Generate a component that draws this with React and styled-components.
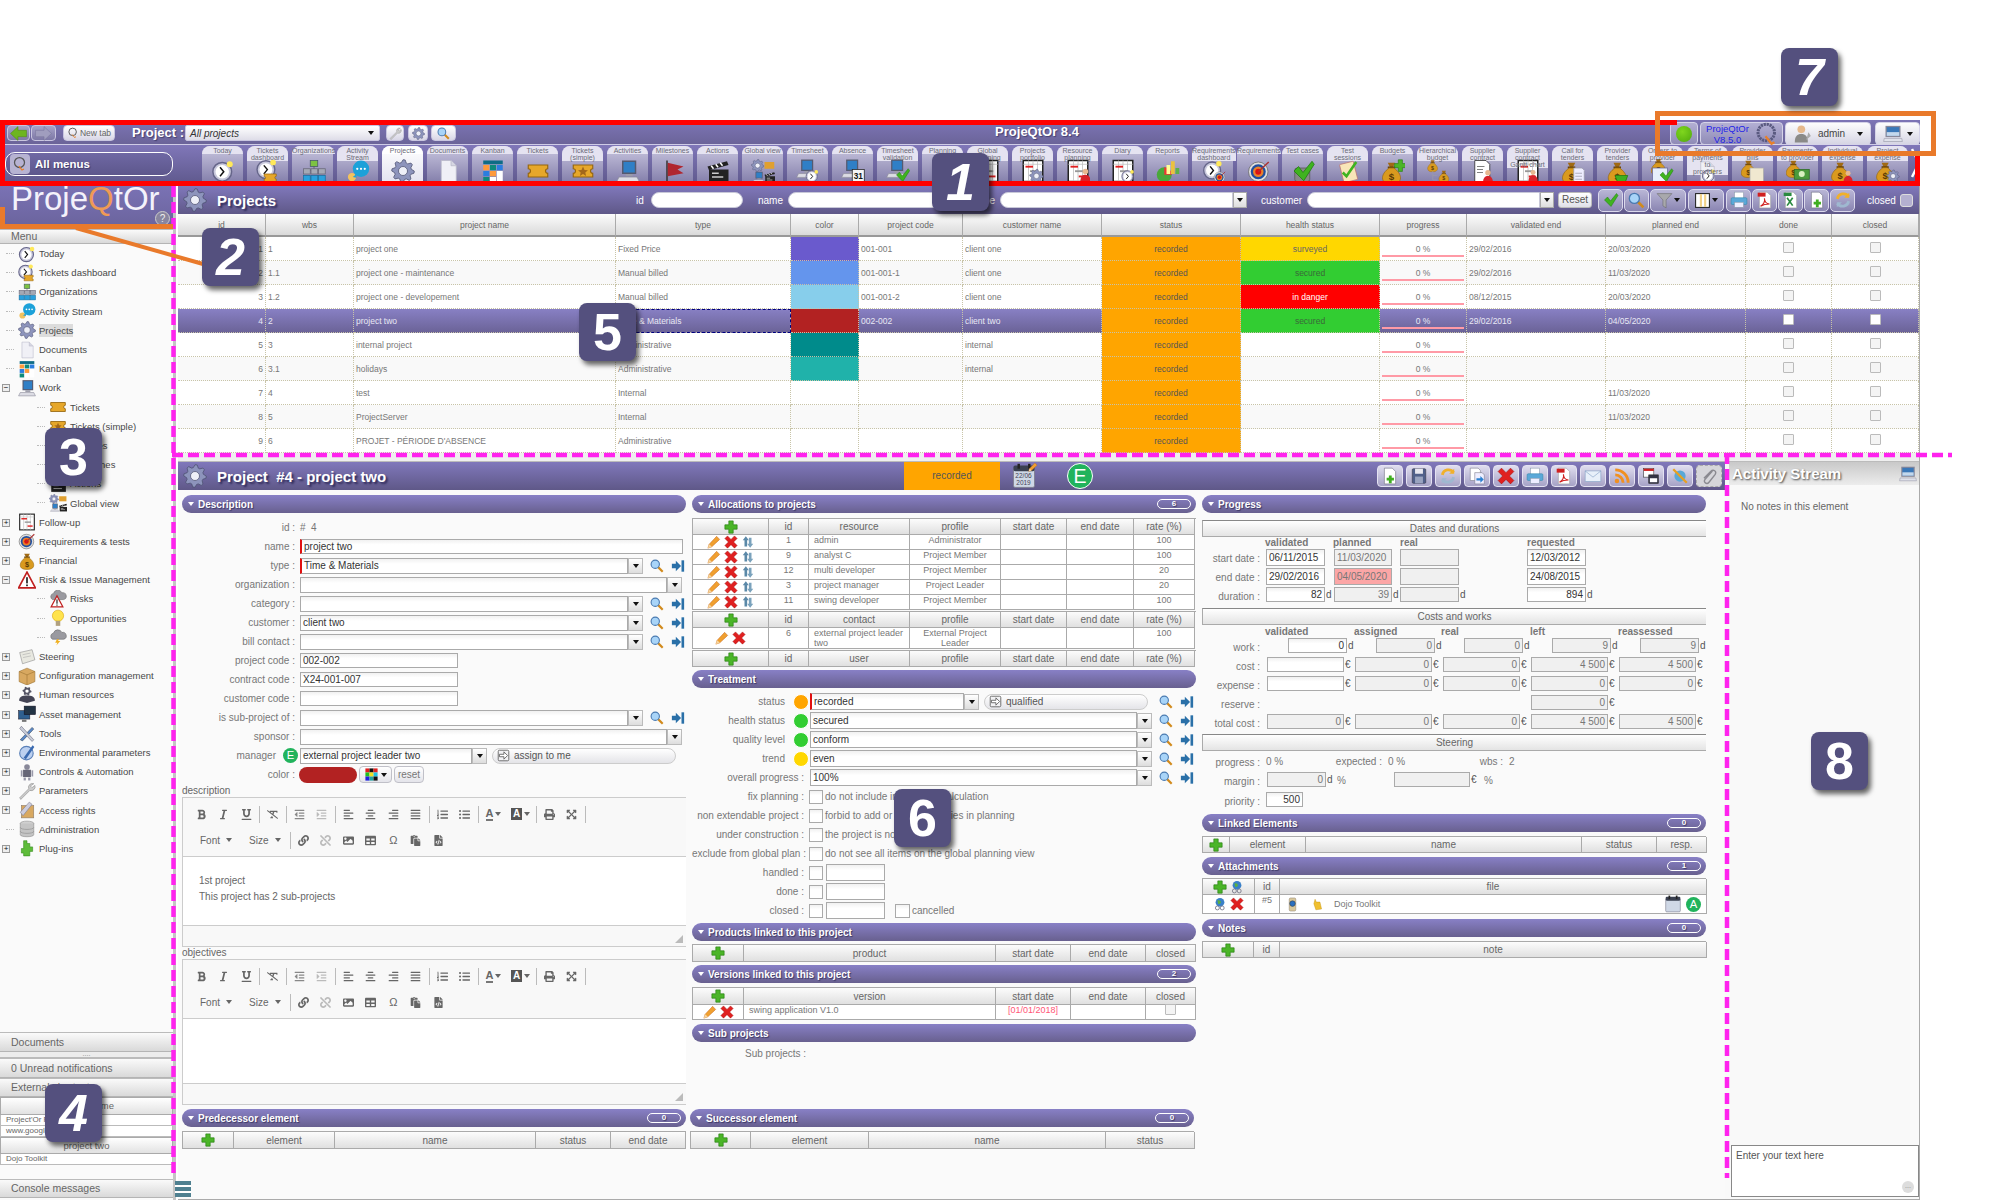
import React from 'react';
import styled, { createGlobalStyle } from 'styled-components';
import { FaBold, FaItalic, FaUnderline, FaRemoveFormat, FaOutdent, FaIndent, FaAlignLeft, FaAlignCenter, FaAlignRight, FaAlignJustify, FaListOl, FaListUl, FaPrint, FaExpandArrowsAlt, FaLink, FaUnlink, FaImage, FaTable, FaPaste, FaFileCode } from 'react-icons/fa';

const Global = createGlobalStyle`
  html, body { margin: 0; padding: 0; background: #fff; font-family: "Liberation Sans", Arial, sans-serif; }
  * { box-sizing: border-box; }
`;

/* ---------- drawings ---------- */
const gearPts = (cx, cy, r, n = 8) => {
  const pts = [];
  for (let i = 0; i < n * 4; i++) {
    const a = (i / (n * 4)) * Math.PI * 2;
    const q = i % 4;
    const rr = q === 0 || q === 1 ? r : r * 0.76;
    pts.push(`${(cx + rr * Math.cos(a)).toFixed(1)},${(cy + rr * Math.sin(a)).toFixed(1)}`);
  }
  return pts.join(' ');
};
const P = {
  clock: <><circle cx="15" cy="17" r="12.5" fill="#c8c8dc" stroke="#66668a" strokeWidth="2" /><circle cx="15" cy="17" r="9" fill="#fff" /><path d="M12 11l5 6-5 6" stroke="#111" strokeWidth="2" fill="none" /><circle cx="25" cy="7" r="4" fill="#ffe95a" /></>,
  ticket: <path d="M3 8h26v5a3 3 0 0 0 0 6v5H3v-5a3 3 0 0 0 0-6z" fill="#e6a72a" stroke="#96660e" strokeWidth="1.5" />,
  ticketStar: <><path d="M3 8h26v5a3 3 0 0 0 0 6v5H3v-5a3 3 0 0 0 0-6z" fill="#e6a72a" stroke="#96660e" strokeWidth="1.5" /><path d="M16 10l2 4.5 4.6.4-3.5 3 1 4.6-4.1-2.4-4.100 2.400 1-4.600-3.500-3 4.600-.4z" fill="#a2671a" /></>,
  org: <><path d="M16 9v6M7 15h18M7 15v4M16 15v4M25 15v4" stroke="#555" fill="none" /><rect x="11" y="2" width="10" height="8" fill="#7dc242" stroke="#456" /><rect x="2" y="13" width="9" height="7" fill="#a5a9b5" stroke="#667" /><rect x="12" y="13" width="9" height="7" fill="#a5a9b5" stroke="#667" /><rect x="22" y="13" width="9" height="7" fill="#a5a9b5" stroke="#667" /><rect x="2" y="22" width="9" height="8" fill="#2aa0dd" stroke="#1670a0" /><rect x="12" y="22" width="9" height="8" fill="#2aa0dd" stroke="#1670a0" /><rect x="22" y="22" width="9" height="8" fill="#2aa0dd" stroke="#1670a0" /></>,
  chat: <><circle cx="8" cy="24" r="5.500" fill="#f2c25e" /><circle cx="20" cy="13" r="11" fill="#1ca1d9" /><path d="M9 24l5-4v5z" fill="#1ca1d9" /><circle cx="15" cy="13" r="1.500" fill="#fff" /><circle cx="20" cy="13" r="1.500" fill="#fff" /><circle cx="25" cy="13" r="1.500" fill="#fff" /></>,
  gear: <><polygon points={gearPts(16, 16, 15)} fill="#8d94bc" stroke="#4c5070" /><circle cx="16" cy="16" r="6" fill="#eef0f8" stroke="#4c5070" /></>,
  doc: <><path d="M7 2h13l7 7v21H7z" fill="#f0f0f6" stroke="#b8b8c8" /><path d="M20 2v7h7" fill="#d6d6e2" stroke="#b8b8c8" /></>,
  kanban: <><rect x="3" y="2" width="26" height="5" fill="#0e6c86" /><rect x="3" y="8" width="8" height="7" fill="#ff9a3c" /><rect x="12" y="8" width="8" height="7" fill="#0e8a7a" /><rect x="21" y="8" width="8" height="7" fill="#2b7de0" /><rect x="3" y="16" width="8" height="7" fill="#2b7de0" /><rect x="12" y="16" width="8" height="7" fill="#ff9a3c" /><rect x="3" y="24" width="8" height="7" fill="#0e8a7a" /><rect x="12" y="24" width="8" height="7" fill="#fff" /><rect x="21" y="16" width="8" height="15" fill="#fff" /></>,
  computer: <><rect x="8" y="2" width="19" height="18" fill="#555a70" /><rect x="10" y="4" width="15" height="14" fill="#2f7fc6" /><path d="M13 20h9v3h-9z" fill="#9a9aa8" /><path d="M4 24h24l3 6H1z" fill="#dcdce4" stroke="#8a8a98" /></>,
  flag: <><rect x="7" y="2" width="2" height="29" fill="#333" /><path d="M9 5l21 5-8 4 8 5-21 4z" fill="#b0262f" /></>,
  clapper: <><path d="M2 10l26-7 2 5-26 7z" fill="#222" /><path d="M7 9l3 4M13 7l3 4M19 5l3 4" stroke="#fff" strokeWidth="2" /><rect x="4" y="14" width="26" height="16" fill="#222" /><rect x="8" y="18" width="9" height="2" fill="#ccc" /><rect x="8" y="23" width="15" height="2" fill="#ccc" /></>,
  gantt: <><rect x="3" y="2" width="26" height="28" fill="#fff" stroke="#222" strokeWidth="2" /><path d="M3 7h26M10 2v28M16 2v28M22 2v28" stroke="#bbb" /><rect x="6" y="9" width="10" height="2.500" fill="#e02020" /><rect x="12" y="15" width="11" height="2.500" fill="#999" /><rect x="17" y="22" width="9" height="2.500" fill="#e02020" /></>,
  bag: <><path d="M11 3h10l-3 6h-4z" fill="#a06a14" /><rect x="11" y="8" width="10" height="2.500" fill="#6a4408" /><path d="M13 10h6c6 4 9 9 9 13 0 6-5 8-12 8S4 29 4 23c0-4 3-9 9-13z" fill="#d99a1e" stroke="#9a6a10" /><text x="16" y="26" fontSize="13" fontWeight="700" textAnchor="middle" fill="#5a3a05" fontFamily="Liberation Sans">$</text></>,
  check: <path d="M3 16l6-6 6 8L27 3l3 4-14 22z" fill="#3fb31f" stroke="#1f7a10" />,
  target: <><circle cx="15" cy="17" r="13" fill="#ddd" stroke="#666" /><circle cx="15" cy="17" r="10" fill="#1f4f9f" /><circle cx="15" cy="17" r="7" fill="#e8802a" /><circle cx="15" cy="17" r="4" fill="#d11" /><path d="M15 17L29 4" stroke="#a33" strokeWidth="2" /></>,
  person: <><circle cx="16" cy="9" r="6" fill="#e8b890" /><path d="M5 31c0-11 5-15 11-15s11 4 11 15z" fill="#d8232a" /></>,
  pie: <><circle cx="11" cy="21" r="10" fill="#49a83a" /><path d="M11 21V11a10 10 0 0 1 10 10z" fill="#e33" /><rect x="14" y="8" width="5" height="12" fill="#ff9" /><rect x="20" y="3" width="5" height="17" fill="#ebc23f" /><rect x="26" y="12" width="5" height="8" fill="#5bb04a" /></>,
  clipboard: <><rect x="7" y="5" width="19" height="25" rx="1" transform="rotate(-14 16 16)" fill="#f8e5b8" stroke="#b77" /><path d="M9 18l5 5L27 4" stroke="#3fb31f" strokeWidth="3.500" fill="none" /></>,
  pencil: <><path d="M2 30l3-9L22 3l7 7-18 17z" fill="#f0a030" stroke="#c05a10" /><path d="M2 30l3-9 6 6z" fill="#f6d6a0" /></>,
  cross: <path d="M2 8l6-6 8 8 8-8 6 6-8 8 8 8-6 6-8-8-8 8-6-6 8-8z" fill="#e02020" stroke="#a01010" />,
  plus: <path d="M11 2h10v9h9v10h-9v9H11v-9H2V11h9z" fill="#4bb528" stroke="#257d10" strokeWidth="1.500" />,
  refresh: <><path d="M4 12L11 3l7 9h-4v14H8V12z" fill="#5b89a8" /><path d="M28 20l-7 9-7-9h4V6h6v14z" fill="#7aa2bc" /></>,
  mag: <><path d="M18 18l11 11" stroke="#d18a1c" strokeWidth="5" /><circle cx="12" cy="12" r="9.500" fill="#a8d4f8" stroke="#4a7ab0" strokeWidth="2.500" /></>,
  goto: <><rect x="24" y="3" width="6" height="26" fill="#2a70a8" /><path d="M2 11h9V4l12 12-12 12v-7H2z" fill="#2a70a8" /></>,
  warning: <><path d="M16 2l15 28H1z" fill="#fff" stroke="#c02020" strokeWidth="3" /><rect x="14.500" y="11" width="3" height="11" fill="#222" /><rect x="14.500" y="24" width="3" height="3" fill="#222" /></>,
  bulb: <><circle cx="16" cy="12" r="10" fill="#ffe34d" stroke="#d8a000" /><rect x="12" y="21" width="8" height="9" fill="#b0a080" /></>,
  cloud: <><path d="M6 20a6 6 0 0 1 2-11 8 8 0 0 1 15-1 6 6 0 0 1 3 12z" fill="#9a9aa0" stroke="#666" /><path d="M14 20l-3 6h4l-2 5 7-8h-4l2-3z" fill="#f0b020" /></>,
  steer: <><path d="M3 8l22-5 5 18-22 7z" fill="#e8e8e0" stroke="#888" /><path d="M8 12l14-3M9 17l14-3" stroke="#aaa" /></>,
  box: <><path d="M16 2l14 6v18l-14 6-14-6V8z" fill="#d8a860" stroke="#9a7030" /><path d="M2 8l14 6 14-6M16 14v18" stroke="#9a7030" fill="none" /></>,
  hr: <><polygon points={gearPts(16, 9, 8, 6)} fill="#556" /><circle cx="16" cy="9" r="3" fill="#fff" /><path d="M2 26c0-7 6-9 14-9s14 2 14 9l-14 4z" fill="#445" /></>,
  asset: <><rect x="1" y="10" width="20" height="15" fill="#2f5f8f" stroke="#223" /><rect x="11" y="2" width="20" height="15" fill="#223344" stroke="#112" /><rect x="7" y="26" width="8" height="4" fill="#777" /></>,
  tools: <><path d="M4 28L25 6l3 3L8 30z" fill="#5a88c8" stroke="#345" /><path d="M6 4l22 24-3 3L3 8z" fill="#c8ccd8" stroke="#667" /></>,
  env: <><circle cx="15" cy="18" r="12" fill="#bcd0f0" stroke="#5a80b8" strokeWidth="2" /><path d="M10 26L26 4l3 3L14 29z" fill="#3a6ab0" /></>,
  robot: <><circle cx="16" cy="7" r="5" fill="#889" /><rect x="9" y="12" width="14" height="13" fill="#667" /><rect x="5" y="13" width="3" height="11" fill="#99a" /><rect x="24" y="13" width="3" height="11" fill="#99a" /><rect x="10" y="26" width="4" height="5" fill="#99a" /><rect x="18" y="26" width="4" height="5" fill="#99a" /></>,
  wrench: <path d="M28 3a7 7 0 0 0-9 9L3 28l2 3 16-16a7 7 0 0 0 9-9l-5 4-3-3z" fill="#ccc" stroke="#888" />,
  access: <><rect x="6" y="8" width="22" height="22" fill="#d8a860" stroke="#876" /><path d="M4 20L20 2l5 4L9 26z" fill="#ccd" stroke="#778" /></>,
  db: <><ellipse cx="16" cy="6" rx="12" ry="4" fill="#d0d0d0" stroke="#888" /><path d="M4 6v20c0 5 24 5 24 0V6" fill="#c4c4c4" stroke="#888" /><path d="M4 13c0 5 24 5 24 0M4 20c0 5 24 5 24 0" stroke="#888" fill="none" /></>,
  puzzle: <path d="M10 3h6v5h5v6h5v8h-5v8H10v-5H6v-8h4z" fill="#5ebc3a" stroke="#308818" />,
  filter: <path d="M2 3h28L19 15v15l-6-4V15z" fill="#a8a8ac" stroke="#666" />,
  columns: <><rect x="3" y="3" width="26" height="26" fill="#fff" stroke="#222" strokeWidth="2" /><rect x="11" y="4" width="4" height="24" fill="#f2d28a" /><rect x="19" y="4" width="4" height="24" fill="#f2d28a" /></>,
  printer: <><rect x="8" y="2" width="16" height="12" fill="#fff" stroke="#89a" /><rect x="2" y="12" width="28" height="12" rx="2" fill="#5aa8d8" stroke="#38a" /><rect x="8" y="20" width="16" height="9" fill="#eef" stroke="#89a" /></>,
  pdf: <><path d="M6 2h14l6 6v22H6z" fill="#fff" stroke="#999" /><rect x="3" y="3" width="14" height="7" fill="#d02020" /><path d="M8 27c6-4 8-10 7-14 0 6 4 10 9 10-5 0-11 1-16 4z" fill="none" stroke="#d02020" strokeWidth="2" /></>,
  excel: <><path d="M6 2h14l6 6v22H6z" fill="#fff" stroke="#999" /><rect x="3" y="3" width="14" height="6" fill="#2a8a40" /><path d="M9 12l10 14M19 12L9 26" stroke="#2a8a40" strokeWidth="3" /></>,
  newdoc: <><path d="M6 2h14l6 6v22H6z" fill="#fff" stroke="#667" /><path d="M14 15h5v4h4v5h-4v5h-5v-5h-4v-5h4z" fill="#3fae20" /></>,
  save: <><rect x="4" y="3" width="24" height="26" rx="2" fill="#50608a" stroke="#334" /><rect x="9" y="3" width="14" height="9" fill="#e8e8f0" /><rect x="9" y="17" width="14" height="12" fill="#9aa4c0" /></>,
  orangeRefresh: <><path d="M6 14a11 11 0 0 1 20-4" stroke="#f0b02c" strokeWidth="5" fill="none" /><path d="M27 3v9h-9z" fill="#f0b02c" /><path d="M26 18a11 11 0 0 1-20 4" stroke="#9fb8d0" strokeWidth="5" fill="none" /><path d="M5 29v-9h9z" fill="#9fb8d0" /></>,
  copydoc: <><path d="M4 2h14l4 4v18H4z" fill="#fff" stroke="#778" /><path d="M12 10h13l4 4v16H12z" fill="#eef" stroke="#778" /><path d="M15 20h7v-4l6 6-6 6v-4h-7z" fill="#2a80d0" /></>,
  assign: <><rect x="3" y="3" width="26" height="26" rx="3" fill="#f2f2f4" stroke="#555" strokeWidth="2" /><path d="M6 13h11V7l9 9-9 9v-6H6z" fill="#fff" stroke="#555" strokeWidth="2" /></>,
  mail: <><rect x="2" y="7" width="28" height="19" fill="#e8f0fa" stroke="#7a98c0" /><path d="M2 7l14 11L30 7" stroke="#7a98c0" fill="none" /></>,
  rss: <><circle cx="7" cy="25" r="4" fill="#f09020" /><path d="M4 14a14 14 0 0 1 14 14M4 5a23 23 0 0 1 23 23" stroke="#f09020" strokeWidth="5" fill="none" /></>,
  windows: <><rect x="3" y="3" width="18" height="15" fill="#fff" stroke="#333" /><rect x="3" y="3" width="18" height="4" fill="#d02020" /><rect x="12" y="14" width="17" height="15" fill="#334" stroke="#222" /><rect x="14" y="20" width="13" height="7" fill="#fff" /></>,
  noBell: <><circle cx="16" cy="16" r="10" fill="#5aa8d8" /><path d="M4 4l24 24" stroke="#e8a020" strokeWidth="4" /></>,
  clip: <path d="M22 7L9 22c-4 5 3 10 7 5L27 13c3-5-3-10-8-5L7 20" fill="none" stroke="#8a8a90" strokeWidth="2.500" />,
  calendar: <><rect x="3" y="6" width="26" height="24" rx="2" fill="#cfd8e6" stroke="#778" /><rect x="3" y="3" width="26" height="7" rx="2" fill="#3a4050" /><rect x="8" y="1" width="3" height="6" fill="#222" /><rect x="21" y="1" width="3" height="6" fill="#222" /></>,
  monitor: <><rect x="4" y="3" width="24" height="18" fill="#889" /><rect x="6" y="5" width="20" height="14" fill="#3a78b8" /><rect x="6" y="13" width="20" height="6" fill="#c4d8ec" /><path d="M2 23h28l1 5H1z" fill="#dfe1ea" stroke="#99a" /></>,
  arrowL: <path d="M1 16L15 3v7h16v12H15v7z" fill="#6db520" stroke="#4f8a10" />,
  arrowR: <path d="M31 16L17 3v7H1v12h16v7z" fill="#a09dbe" stroke="#77749a" />,
  qlogo: <><circle cx="15" cy="14" r="11" fill="none" stroke="#5a5a80" strokeWidth="4" strokeDasharray="3 1" /><path d="M14 19l8 10 4-2" stroke="#e8802a" strokeWidth="3" fill="none" /></>,
  qlogoSmall: <><circle cx="15" cy="13" r="10" fill="none" stroke="#555" strokeWidth="2.500" /><path d="M14 20l6 8 4-2" stroke="#e8802a" strokeWidth="2.500" fill="none" /></>,
  user: <><circle cx="14" cy="9" r="6.500" fill="#e6b98c" /><path d="M3 31c0-10 4-14 11-14s11 4 11 14z" fill="#8a8a88" /><path d="M26 14l4 6-8 7z" fill="#aaa" /></>,
  globe: <><circle cx="16" cy="12" r="10" fill="#3a80c8" /><path d="M10 8c4-2 7 0 8 3s-3 6-6 5z" fill="#5cb040" /><circle cx="10" cy="25" r="4.500" fill="none" stroke="#778" strokeWidth="2" /><circle cx="21" cy="25" r="4.500" fill="none" stroke="#778" strokeWidth="2" /></>,
  lens: <><rect x="9" y="2" width="14" height="28" rx="3" fill="#d8c89c" stroke="#876" /><circle cx="16" cy="14" r="6" fill="#2a70c0" stroke="#333" /></>,
  folderHand: <path d="M7 14l3-11 3 7h9l4 17-14 2z" fill="#f0c030" stroke="#c09010" />,
  color: <><rect x="1" y="1" width="10" height="10" fill="#e02020" /><rect x="11" y="1" width="10" height="10" fill="#111" /><rect x="21" y="1" width="10" height="10" fill="#e02020" /><rect x="1" y="11" width="10" height="10" fill="#20c020" /><rect x="11" y="11" width="10" height="10" fill="#f0e020" /><rect x="21" y="11" width="10" height="10" fill="#20c0e0" /><rect x="1" y="21" width="10" height="10" fill="#2020e0" /><rect x="11" y="21" width="10" height="10" fill="#20a0a0" /><rect x="21" y="21" width="10" height="10" fill="#111" /></>,
};
const at = (k, x, y, s = 1) => <g transform={`translate(${x} ${y}) scale(${s})`}>{P[k]}</g>;
const C = {
  ticketsdash: <>{at('clock', -1, -2, 0.95)}{at('ticket', 9, 15, 0.62)}</>,
  globalview: <>{at('gear', 0, 0, 0.55)}<rect x="18" y="4" width="13" height="9" fill="#e0a030" />{at('computer', 2, 16, 0.5)}{at('clapper', 17, 16, 0.5)}</>,
  timesheet: <>{at('computer', 0, -1, 0.85)}{at('clock', 12, 13, 0.6)}</>,
  absence: <>{at('computer', 0, -1, 0.85)}<rect x="15" y="14" width="16" height="16" fill="#f4f4f4" stroke="#222" /><text x="23" y="27" fontSize="11" fontWeight="700" textAnchor="middle" fill="#111" fontFamily="Liberation Sans">31</text></>,
  validation: <>{at('computer', 0, -1, 0.85)}{at('check', 12, 11, 0.65)}</>,
  portfolio: <>{at('gantt', 0, 0)}{at('gear', 11, 13, 0.6)}</>,
  resource: <>{at('gantt', 0, 0)}{at('person', 16, 11, 0.62)}</>,
  diary: <>{at('gantt', 0, 0)}{at('clock', 13, 13, 0.6)}</>,
  reqdash: <>{at('clock', 0, 0, 0.9)}{at('target', 15, 15, 0.55)}</>,
  testcase: <><rect x="5" y="12" width="20" height="18" rx="3" fill="#888" stroke="#555" />{at('check', 1, 0, 1)}</>,
  bagPlus: <>{at('bag', -2, 2)}{at('plus', 17, 0, 0.55)}</>,
  hierarchy: <>{at('bag', 0, 0, 0.55)}{at('bag', 15, 14, 0.55)}<path d="M9 16v12h6M9 22h6" stroke="#99a" fill="none" /></>,
  contract: <><path d="M5 2h15l5 5v24H5z" fill="#fff" stroke="#222" /><path d="M8 10h10M8 14h8M8 18h8" stroke="#555" />{at('person', 13, 13, 0.6)}</>,
  contractGantt: <>{at('gantt', 0, 0)}{at('person', 14, 13, 0.55)}</>,
  bagDoc: <>{at('bag', -2, 2)}<path d="M17 12h11l3 3v15H17z" fill="#eef" stroke="#99a" /><path d="M19 19h9M19 23h9M19 27h9" stroke="#99a" /></>,
  bagCart: <>{at('bag', -1, 2)}<path d="M12 22h17l-3 8H15z" fill="#3fae20" stroke="#1f7a10" /></>,
  bagCheck: <>{at('bag', -3, -3, 0.8)}<rect x="2" y="12" width="20" height="19" fill="#e6eefa" stroke="#669" />{at('check', 10, 11, 0.65)}</>,
  payClock: <>{at('doc', 0, 2, 0.9)}{at('clock', 7, 12, 0.62)}</>,
  bagBill: <>{at('bag', -3, 0, 0.8)}<rect x="12" y="12" width="18" height="18" fill="#f0e8d0" stroke="#aaa" /></>,
  bagCash: <>{at('bag', -3, 0, 0.8)}<rect x="11" y="14" width="20" height="13" fill="#4a9a3c" stroke="#2a6a20" /><circle cx="21" cy="20" r="4" fill="#d8f0c0" /></>,
  bagPerson: <>{at('bag', -3, 2, 0.95)}{at('person', 14, 14, 0.55)}</>,
  bagGear: <>{at('bag', -3, 2, 0.95)}{at('gear', 14, 14, 0.55)}</>,
  risk: <>{at('cloud', 0, -3)}{at('warning', 3, 9, 0.7)}</>,
};
const ALL = { ...P, ...C };
const Ico = ({ n, s = 16, className }) => <svg className={className} width={s} height={s} viewBox="0 0 32 32" aria-hidden="true">{ALL[n]}</svg>;

/* ---------- page ---------- */
const Page = styled.div`position: relative; width: 2000px; height: 1200px; padding-top: 120px; overflow: hidden;`;
const Frame = styled.div`width: 1920px; height: 1080px; display: flex; flex-direction: column; background: #fff;`;
const shadowText = '1px 1px 1px rgba(40,36,80,.6)';

const Row1 = styled.div`height: 25px; flex: none; display: flex; align-items: flex-start; padding-top: 5px; background: linear-gradient(#7d75b6, #6b6499); border-bottom: 1px solid #cfcce6;`;
const LeftGroup = styled.div`width: 456px; display: flex; flex: none; padding-left: 7px;`;
const NavBtn = styled.div`width: ${p => p.$w}px; height: 16px; margin-left: ${p => p.$ml || 0}px; border: 1px solid #c9c6e0; border-radius: 4px; background: ${p => p.$light ? 'linear-gradient(#fff, #d8d6e6)' : 'linear-gradient(#a7a3c8, #7d78a6)'}; display: flex; align-items: center; justify-content: center; gap: 1px; font-size: 8.500px; color: #666; white-space: nowrap; flex: none;`;
const ProjectLabel = styled.div`margin-left: 17px; width: 53px; font-size: 13px; line-height: 15px; font-weight: 700; color: #fff; text-shadow: ${shadowText}; flex: none;`;
const ProjectSelect = styled.div`width: 195px; height: 16px; border: 1px solid #c9c6e0; border-radius: 2px; background: linear-gradient(#fff, #dedde8); display: flex; align-items: center; justify-content: space-between; padding: 0 5px 0 4px; font-size: 10px; font-style: italic; color: #333; flex: none;`;
const Caret = styled.span`display: inline-block; flex: none; width: 0; height: 0; border-left: 3px solid transparent; border-right: 3px solid transparent; border-top: 4px solid ${p => p.$c || '#111'};`;
const AppTitle = styled.div`width: 1162px; flex: none; text-align: center; font-size: 13px; line-height: 13px; font-weight: 700; color: #fff; text-shadow: ${shadowText};`;
const RightGroup = styled.div`margin-left: auto; margin-top: -3px; display: flex; height: 23px; position: relative; z-index: 2;`;
const StatusTile = styled.div`width: ${p => p.$w}px; margin-left: ${p => p.$ml || 0}px; height: 23px; border: 1px solid #d5d3e8; border-radius: 4px; background: ${p => p.$light ? 'linear-gradient(#fdfdfd, #d6d5e4)' : 'linear-gradient(#b3afd3, #8f8bb6)'}; display: flex; align-items: center; justify-content: center; gap: 4px; flex: none;`;
const Led = styled.span`width: 16px; height: 16px; border-radius: 50%; background: radial-gradient(circle at 40% 35%, #7fd61e, #4fa80c);`;
const Version = styled.div`font-size: 9.500px; line-height: 11px; color: #1f1fe8; text-align: center; width: 46px;`;
const AdminName = styled.span`font-size: 10px; color: #444; margin: 0 8px 0 2px;`;

const Row2 = styled.div`height: 41px; flex: none; display: flex; align-items: flex-start; background: linear-gradient(#8077b9, #5d578a);`;
const AllMenus = styled.div`margin: 7px 0 0 5px; width: 168px; height: 24px; border: 1px solid #fff; border-radius: 10px; display: flex; align-items: center; padding-left: 4px; gap: 5px; font-size: 11.500px; font-weight: 700; color: #fff; text-shadow: ${shadowText}; background: linear-gradient(#6f68a4, #5d578c); flex: none;`;
const QTile = styled.span`display: flex; width: 20px; height: 20px; border-radius: 4px; background: #b7b3d2; align-items: center; justify-content: center;`;
const Tabs = styled.div`margin: 1px 0 0 29px; display: flex; gap: 4px; flex: none;`;
const Tab = styled.div`width: 41px; height: 40px; display: grid; border-radius: 8px 8px 0 0; background: ${p => p.$on ? 'linear-gradient(#fff, #e0e0ee)' : 'linear-gradient(#c9c6df, #7d78a6)'};`;
const TabBand = styled.div`grid-area: 1 / 1; align-self: start; display: flex; flex-direction: column; align-items: center; padding: 1px 0 0; border-radius: 8px 8px 0 0; background: ${p => p.$on ? '#fff' : '#e5e3f1'};`;
const TabLine = styled.span`flex: none; position: relative; z-index: 3; font-size: 7px; line-height: 7px; color: #6b6b78; white-space: nowrap;`;
const TabIcon = styled(Ico)`grid-area: 1 / 1; align-self: end; justify-self: center; margin-bottom: 3px; z-index: 2;`;
const MoreArrow = styled.svg`margin: 3px 0 0 3px; flex: none;`;

const Body = styled.div`flex: 1; display: flex; min-height: 0;`;
const Sidebar = styled.div`width: 173px; flex: none; display: flex; flex-direction: column; background: #fafafa;`;
const VSplit = styled.div`width: 3px; flex: none; background: #c4c4c4;`;
const Logo = styled.div`height: 43px; flex: none; position: relative; background: linear-gradient(#7a72b4, #6a639c); color: #f4f2fb; font-size: 33px; line-height: 25px; padding: 0 0 0 11px; white-space: nowrap;`;
const LogoQ = styled.span`color: #ef9a55;`;
const LogoHelp = styled.span`position: absolute; right: 3px; bottom: 3px; width: 15px; height: 15px; border-radius: 50%; background: #88859f; border: 1px solid #ccc; color: #eee; font-size: 10px; line-height: 13px; text-align: center;`;
const AccHead = styled.div`height: ${p => p.$h || 20}px; flex: none; background: linear-gradient(#fafafa, #d9d9d9); border-top: 1px solid #bbb; border-bottom: 1px solid #b4b4b4; font-size: 10.500px; line-height: ${p => (p.$h || 20) - 2}px; padding-left: 11px; color: #666;`;
const Tree = styled.div`flex: 1; background: #fafafa;`;
const TreeRow = styled.div`height: 19.200px; display: flex; align-items: center; position: relative; padding-left: ${p => p.$lvl ? 49 : 18}px; font-size: 9.500px; color: #484848; white-space: nowrap;`;
const TreeLabel = styled.span`margin-left: 3px; background: ${p => p.$on ? '#dcdcdc' : 'none'}; padding: 1px 0;`;
const Expand = styled.span`position: absolute; left: 2px; top: 6px; width: 8px; height: 8px; border: 1px solid #999; background: #eee; font-size: 8px; line-height: 5px; text-align: center; color: #111;`;
const TreeDots = styled.span`position: absolute; left: ${p => p.$lvl ? 37 : 6}px; top: 9px; width: 8px; border-top: 1px dotted #bbb;`;
const Grip = styled.div`height: 6px; flex: none; background: #ececec; border-bottom: 1px solid #bbb; text-align: center; font-size: 7px; line-height: 3px; color: #888;`;
const ShortHead = styled.div`height: ${p => p.$h}px; flex: none; background: linear-gradient(#fff, #e2e2e2); border: 1px solid #aaa; font-size: 9.500px; line-height: ${p => p.$h - 2}px; text-align: center; color: #666;`;
const ShortRow = styled.div`height: 11px; flex: none; background: #fff; border: 1px solid #bbb; border-top: 0; font-size: 8px; line-height: 10px; padding-left: 5px; color: #666; white-space: nowrap;`;
const SideFill = styled.div`height: 14px; flex: none;`;

const Main = styled.div`width: 1742px; margin-left: 2px; flex: none; display: flex; flex-direction: column; border-right: 1px solid #aaa; border-bottom: 1px solid #aaa;`;
const ListTitle = styled.div`height: 28px; flex: none; display: flex; align-items: center; background: linear-gradient(#8078bb, #5f5888); color: #fff;`;
const TitleGear = styled(Ico)`margin-left: 5px; flex: none;`;
const PageTitle = styled.div`margin-left: 10px; width: ${p => p.$w}px; color: #fff; font-size: 15px; font-weight: 700; white-space: nowrap; flex: none; text-shadow: 2px 2px 2px rgba(30,26,70,.75);`;
const FLabel = styled.span`width: ${p => p.$w}px; margin-left: ${p => p.$ml || 0}px; font-size: 10px; text-align: ${p => p.$right ? 'right' : 'left'}; color: #fff; flex: none;`;
const FInput = styled.div`width: ${p => p.$w}px; height: 16px; background: #fff; border: 1px solid #c8c8d8; border-radius: ${p => p.$sq ? '8px 0 0 8px' : '8px'}; margin-left: ${p => p.$ml || 0}px; flex: none;`;
const FArrow = styled.div`width: 14px; height: 16px; background: linear-gradient(#fff, #ddd); border: 1px solid #aaa; display: flex; align-items: center; justify-content: center; flex: none;`;
const ResetBtn = styled.div`width: 34px; height: 16px; margin-left: 4px; background: linear-gradient(#fff, #e0e0e8); border: 1px solid #bbb; border-radius: 3px; color: #555; font-size: 10px; text-align: center; line-height: 14px; flex: none;`;
const ToolBtn = styled.div`width: ${p => p.$w || 25}px; height: ${p => p.$h || 23}px; margin-left: ${p => p.$ml ?? 1}px; flex: none; border: 1px solid #dbd9ec; border-radius: 5px; background: linear-gradient(#b9b6d6, #8a85b2); display: flex; align-items: center; justify-content: center; gap: 1px;`;
const ClosedBox = styled.span`width: 13px; height: 13px; margin-left: 6px; border: 1px solid #ddd; border-radius: 3px; background: #b4b0d0; flex: none;`;

const ListTable = styled.table`width: 1741px; table-layout: fixed; border-collapse: separate; border-spacing: 0; flex: none;`;
const Th = styled.th`width: ${p => p.$w}px; height: 23px; padding: 0; font-size: 8.500px; font-weight: 400; color: #666; background: linear-gradient(#fcfcfc, #dadada); border-right: 1px solid #aaa; border-bottom: 2px solid #999;`;
const Tr = styled.tr`background: ${p => p.$sel ? 'linear-gradient(#8880c4, #6a6296)' : p.$odd ? '#fff' : '#f9f9f9'}; color: ${p => p.$sel ? '#e8e8f4' : '#777'};`;
const Td = styled.td`height: 24px; padding: 0 2px; font-size: 8.500px; white-space: nowrap; border-right: 1px dotted #c8c4a8; border-bottom: 1px dotted #c8c4a8; text-align: ${p => p.$al || 'left'}; ${p => p.$bg ? `background:${p.$bg};` : ''} ${p => p.$tc ? `color:${p.$tc};` : ''} ${p => p.$focus ? 'outline: 1px dashed #000080; outline-offset: -1px;' : ''}`;
const Pct = styled.div`text-align: center; margin-bottom: 1px; line-height: 10px;`;
const PctBar = styled.div`height: 2px; background: #ff9aa6; margin-bottom: -4px;`;
const Chk = styled.span`display: inline-block; width: 11px; height: 11px; margin-top: -3px; vertical-align: middle; border: 1px solid #bbb; border-radius: 1px; background: ${p => p.$sel ? '#fff' : '#f4f4f4'};`;

const HSplit = styled.div`height: 9px; flex: none; background: #efefef; border-bottom: 1px solid #bbb;`;
const Lower = styled.div`flex: 1; display: flex; min-height: 0;`;
const Detail = styled.div`width: 1547px; flex: none; display: flex; flex-direction: column; background: #fafafa;`;
const DetailHead = styled.div`height: 28px; flex: none; display: flex; align-items: center; background: linear-gradient(#8078bb, #5f5888);`;
const StatusFlag = styled.div`width: 96px; height: 28px; flex: none; background: #ffa500; color: #555; font-size: 10px; line-height: 28px; text-align: center;`;
const DateTile = styled.div`width: 24px; height: 26px; margin-left: 11px; flex: none; position: relative;`;
const DatePen = styled.span`position: absolute; right: -3px; top: -1px; display: flex;`;
const DateText = styled.span`position: absolute; left: 2px; top: 9px; width: 21px; font-size: 6.500px; line-height: 7px; text-align: center; color: #445;`;
const Avatar = styled.span`width: ${p => p.$s}px; height: ${p => p.$s}px; margin-left: ${p => p.$ml || 0}px; flex: none; border-radius: 50%; background: #21b35c; border: ${p => p.$b ? '1px solid #fff' : '0'}; color: #fff; font-size: ${p => p.$s * 0.75}px; line-height: ${p => p.$s - (p.$b ? 2 : 0)}px; text-align: center;`;
const DetailTools = styled.div`margin-left: auto; margin-right: 3px; display: flex; gap: 3px; flex: none;`;
const DTool = styled.div`width: 26px; height: 22px; flex: none; border: 1px solid ${p => p.$off ? '#aaa' : '#e4e2f2'}; border-style: ${p => p.$off ? 'dashed' : 'solid'}; border-radius: 4px; background: ${p => p.$off ? '#d6d6da' : 'linear-gradient(#dfddee, #a6a2c6)'}; display: flex; align-items: center; justify-content: center;`;
const Columns = styled.div`flex: 1; display: grid; grid-template-columns: 504px 504px 504px; column-gap: 6px; padding: 5px 0 0 4px;`;
const Col = styled.div`display: flex; flex-direction: column; min-width: 0;`;
const Pill = styled.div`height: 18px; flex: none; margin: ${p => p.$mt || 0}px ${p => p.$shift ? 2 : 0}px 0 ${p => p.$shift ? -2 : 0}px; border-radius: 9px; background: linear-gradient(#8880c6, #68608f); display: flex; align-items: center; padding: 0 5px 0 6px; color: #fff; font-size: 10px; font-weight: 700; gap: 4px; text-shadow: 1px 1px 1px #3c3864;`;
const PillCount = styled.span`margin-left: auto; width: 34px; height: 10px; border: 1px solid #fff; border-radius: 5px; font-size: 8px; line-height: 8px; text-align: center;`;
const FormRows = styled.div`margin-top: ${p => p.$mt}px; display: flex; flex-direction: column; flex: none;`;
const FRow = styled.div`height: 19px; display: flex; align-items: center; flex: none;`;
const Lbl = styled.span`width: ${p => p.$w}px; flex: none; text-align: right; font-size: 10px; color: #777; white-space: nowrap;`;
const Val = styled.span`margin-left: ${p => p.$ml ?? 5}px; font-size: 10px; color: ${p => p.$c || '#777'}; white-space: nowrap;`;
const Inp = styled.div`width: ${p => p.$w}px; height: ${p => p.$h || 15}px; margin-left: ${p => p.$ml ?? 5}px; flex: none; border: 1px solid #aaa; ${p => p.$req ? 'border-left: 2px solid #e01010;' : ''} background: ${p => p.$pink ? '#fca6a6' : p.$off ? '#f0f0f0' : 'linear-gradient(#f1f1f1, #fff 35%)'}; color: ${p => p.$off || p.$pink ? '#777' : '#333'}; font-size: 10px; line-height: ${p => (p.$h || 15) - 2}px; padding: 0 2px; text-align: ${p => p.$right ? 'right' : 'left'}; white-space: nowrap;`;
const Arrow = styled.div`width: 15px; height: 16px; flex: none; background: linear-gradient(#fff, #ddd); border: 1px solid #bbb; display: flex; align-items: center; justify-content: center;`;
const IconGap = styled.span`display: inline-flex; margin-left: ${p => p.$ml}px; flex: none;`;
const Dot = styled.span`width: 16px; height: 16px; margin-left: 8px; border-radius: 50%; flex: none; background: ${p => p.$c}; border: 1px solid #fff;`;
const ActionBtn = styled.div`width: ${p => p.$w}px; height: 16px; margin-left: 5px; flex: none; border: 1px solid #ccc; border-radius: 8px; background: linear-gradient(#fff, #e4e4e8); display: flex; align-items: center; gap: 4px; padding-left: 4px; font-size: 10px; color: #555;`;
const Swatch = styled.span`width: 58px; height: 16px; border-radius: 8px; margin-left: 4px; background: #b22222; flex: none;`;
const Mini = styled.div`height: 17px; flex: none; width: ${p => p.$w}px; margin-left: ${p => p.$ml}px; border: 1px solid #c0c0c8; border-radius: 4px; background: linear-gradient(#fff, #e4e4ea); display: flex; align-items: center; justify-content: center; gap: 3px; font-size: 10px; color: #777;`;
const EdLabel = styled.div`height: ${p => p.$h}px; flex: none; font-size: 10px; line-height: ${p => p.$h}px; color: #666;`;
const Editor = styled.div`height: ${p => p.$h}px; flex: none; display: flex; flex-direction: column; border-top: 1px solid #ccc; border-left: 1px solid #ccc; background: #f8f8f8;`;
const EdBar = styled.div`height: 59px; flex: none; border-bottom: 1px solid #ccc; padding: 3px 0 0 7px;`;
const EdRow = styled.div`height: 26px; display: flex; align-items: center; color: #666; font-size: 10px;`;
const EdBtn = styled.span`width: ${p => p.$w || 22.500}px; flex: none; display: flex; align-items: center; justify-content: center; gap: 2px; font-size: 11px;`;
const EdSep = styled.span`width: 1px; height: 17px; margin: 0 1.500px; background: #bbb; flex: none;`;
const EdCombo = styled.span`width: 49px; flex: none; display: flex; align-items: center; justify-content: space-between; padding: 0 7px 0 10px; font-size: 10px;`;
const EdContent = styled.div`flex: 1; background: #fff; padding: 16px 0 0 16px; font-size: 10px; line-height: 16px; color: #666;`;
const EdFoot = styled.div`height: 22px; flex: none; border-top: 1px solid #ccc; border-bottom: 1px solid #ccc; position: relative; background: #f8f8f8;`;
const Grabber = styled.span`position: absolute; right: 3px; bottom: 3px; width: 0; height: 0; border-left: 8px solid transparent; border-bottom: 8px solid #bbb;`;
const ABox = styled.span`display: inline-block; width: 11px; height: 12px; background: #555; color: #fff; font-weight: 700; font-size: 10px; line-height: 12px; text-align: center;`;
const AUnder = styled.span`font-weight: 700; font-size: 11px; border-bottom: 2px solid #777; line-height: 11px;`;

const Grid = styled.div`margin: ${p => p.$mt || 0}px ${p => p.$shift ? 2 : 0}px 0 ${p => p.$shift ? -2 : 0}px; flex: none; display: grid; grid-template-columns: ${p => p.$cols}; border-left: 1px solid #aaa; border-top: 1px solid #aaa;`;
const HCell = styled.div`height: ${p => p.$h || 16}px; background: linear-gradient(#fcfcfc, #e0e0e0); border-right: 1px solid #aaa; border-bottom: 1px solid #aaa; font-size: 10px; color: #666; display: flex; align-items: center; justify-content: center; gap: 3px;`;
const BCell = styled.div`height: ${p => p.$h || 15}px; background: #fff; border-right: 1px solid #aaa; border-bottom: 1px solid #aaa; font-size: ${p => p.$fs || 9}px; line-height: 10px; color: ${p => p.$c || '#777'}; padding: 0 5px; text-align: ${p => p.$al || 'left'}; display: ${p => p.$flex ? 'flex' : 'block'}; justify-content: center; align-items: center; gap: 3px; white-space: ${p => p.$wrap ? 'normal' : 'nowrap'};`;
const SubGap = styled.div`height: ${p => p.$h}px; flex: none;`;
const CalcBar = styled.div`height: 17px; flex: none; margin-top: ${p => p.$mt}px; border-top: 1px solid #888; border-bottom: 1px solid #aaa; border-left: 1px solid #aaa; background: linear-gradient(#fff, #e4e4e4); font-size: 10px; line-height: 15px; text-align: center; color: #666;`;
const Heads = styled.div`height: ${p => p.$h}px; flex: none; position: relative; display: flex; font-size: 10px; line-height: ${p => p.$h}px; font-weight: 700; color: #777;`;
const HeadItem = styled.span`margin-left: ${p => p.$ml}px; width: ${p => p.$w}px; flex: none;`;
const CRow = styled.div`height: ${p => p.$h || 19}px; flex: none; display: flex; align-items: flex-start;`;
const CLbl = styled.span`width: 58px; flex: none; text-align: right; font-size: 10px; line-height: ${p => p.$lh || 20}px; color: #777; white-space: nowrap;`;
const Unit = styled.span`width: ${p => p.$w}px; flex: none; font-size: 10px; line-height: 16px; padding-left: 1px; color: #555;`;
const Cell = styled.div`width: 88px; margin-left: ${p => p.$ml || 0}px; flex: none; display: flex; justify-content: flex-end;`;
const Blank = styled.div`width: ${p => p.$w}px; margin-left: ${p => p.$ml || 0}px; flex: none;`;
const CText = styled.span`margin-left: ${p => p.$ml}px; width: ${p => p.$w}px; flex: none; font-size: 10px; line-height: 18px; color: ${p => p.$c || '#777'}; text-align: ${p => p.$right ? 'right' : 'left'}; white-space: nowrap;`;
const SubLine = styled.div`margin: 6px 0 0 53px; font-size: 10px; color: #777;`;
const FileName = styled.span`flex: 1; font-size: 9px; color: #777; margin-left: 6px;`;
const RowIcons = styled.div`display: flex; gap: 4px; align-items: center; width: 100%;`;

const Activity = styled.div`width: 194px; flex: none; display: flex; flex-direction: column; background: #f9f9f9; padding-left: 4px;`;
const ActHead = styled.div`height: 23px; flex: none; display: flex; align-items: center; justify-content: space-between; padding: 0 2px 0 3px; background: linear-gradient(#c9c9c9, #ececec); color: #fff; font-size: 15px; font-weight: 700; text-shadow: 1px 1px 2px #444; white-space: nowrap;`;
const ActEmpty = styled.div`flex: 1; padding: 16px 0 0 12px; font-size: 10px; color: #666;`;
const ActInput = styled.div`height: 52px; flex: none; margin: 0 0 2px 2px; border: 1px solid #888; background: #fff; font-size: 10px; padding: 4px; color: #555; position: relative;`;
const ActDot = styled.span`position: absolute; right: 4px; bottom: 3px; width: 12px; height: 12px; border-radius: 50%; background: #ddd; font-size: 7px; line-height: 10px; color: #888; text-align: center;`;

/* ---------- annotations ---------- */
const Overlay = styled.svg`position: absolute; left: 0; top: 0; pointer-events: none; z-index: 5;`;
const Badge = styled.div`position: absolute; z-index: 6; left: ${p => p.$x}px; top: ${p => p.$y}px; width: 57px; height: 58px; border-radius: 8px; background: #54507e; color: #fff; display: flex; align-items: center; justify-content: center; font-size: 52px; font-weight: 700; font-style: ${p => p.$it ? 'italic' : 'normal'}; box-shadow: 3px 4px 5px rgba(0,0,0,.6);`;
const Handle = styled.div`position: absolute; z-index: 4; left: 175px; top: 1181px; width: 16px; height: 16px; background: repeating-linear-gradient(#4f8090 0 4px, #fff 4px 6px);`;

/* ---------- data ---------- */
const tabs = [
  [['Today'], 'clock'], [['Tickets', 'dashboard'], 'ticketsdash'], [['Organizations'], 'org'], [['Activity', 'Stream'], 'chat'], [['Projects'], 'gear', 1], [['Documents'], 'doc'], [['Kanban'], 'kanban'], [['Tickets'], 'ticket'], [['Tickets', '(simple)'], 'ticketStar'], [['Activities'], 'computer'], [['Milestones'], 'flag'], [['Actions'], 'clapper'], [['Global view'], 'globalview'], [['Timesheet'], 'timesheet'], [['Absence'], 'absence'], [['Timesheet', 'validation'], 'validation'], [['Planning'], 'gantt'], [['Global', 'planning'], 'gantt'], [['Projects', 'portfolio'], 'portfolio'], [['Resource', 'planning'], 'resource'], [['Diary'], 'diary'], [['Reports'], 'pie'], [['Requirements', 'dashboard'], 'reqdash'], [['Requirements'], 'target'], [['Test cases'], 'testcase'], [['Test', 'sessions'], 'clipboard'], [['Budgets'], 'bagPlus'], [['Hierarchical', 'budget'], 'hierarchy'], [['Supplier', 'contract'], 'contract'], [['Supplier', 'contract', 'Gantt chart'], 'contractGantt'], [['Call for', 'tenders'], 'bagDoc'], [['Provider', 'tenders'], 'bagCart'], [['Orders to', 'provider'], 'bagCheck'], [['Terms of', 'payments', 'to', 'providers'], 'payClock'], [['Provider', 'bills'], 'bagBill'], [['Payments', 'to provider'], 'bagCash'], [['Individual', 'expense'], 'bagPerson'], [['Project', 'expense'], 'bagGear'],
];
const tree = [['Today', 'clock', 0], ['Tickets dashboard', 'ticketsdash', 0], ['Organizations', 'org', 0], ['Activity Stream', 'chat', 0], ['Projects', 'gear', 0, null, true], ['Documents', 'doc', 0], ['Kanban', 'kanban', 0], ['Work', 'computer', 0, '−'], ['Tickets', 'ticket', 1], ['Tickets (simple)', 'ticketStar', 1], ['Activities', 'computer', 1], ['Milestones', 'flag', 1], ['Actions', 'clapper', 1], ['Global view', 'globalview', 1], ['Follow-up', 'gantt', 0, '+'], ['Requirements & tests', 'target', 0, '+'], ['Financial', 'bag', 0, '+'], ['Risk & Issue Management', 'warning', 0, '−'], ['Risks', 'risk', 1], ['Opportunities', 'bulb', 1], ['Issues', 'cloud', 1], ['Steering', 'steer', 0, '+'], ['Configuration management', 'box', 0, '+'], ['Human resources', 'hr', 0, '+'], ['Asset management', 'asset', 0, '+'], ['Tools', 'tools', 0, '+'], ['Environmental parameters', 'env', 0, '+'], ['Controls & Automation', 'robot', 0, '+'], ['Parameters', 'wrench', 0, '+'], ['Access rights', 'access', 0, '+'], ['Administration', 'db', 0], ['Plug-ins', 'puzzle', 0, '+']];
const listCols = [['id', 88], ['wbs', 88], ['project name', 262], ['type', 175], ['color', 68], ['project code', 104], ['customer name', 139], ['status', 139], ['health status', 139], ['progress', 87], ['validated end', 139], ['planned end', 140], ['done', 86], ['closed', 87]];
const listRows = [
  ['1', '1', 'project one', 'Fixed Price', '#6a5acd', '001-001', 'client one', 'surveyed', '29/02/2016', '20/03/2020'],
  ['2', '1.1', 'project one - maintenance', 'Manual billed', '#6495ed', '001-001-1', 'client one', 'secured', '29/02/2016', '11/03/2020'],
  ['3', '1.2', 'project one - developement', 'Manual billed', '#87ceeb', '001-001-2', 'client one', 'in danger', '08/12/2015', '20/03/2020'],
  ['4', '2', 'project two', 'Time & Materials', '#b22222', '002-002', 'client two', 'secured', '29/02/2016', '04/05/2020'],
  ['5', '3', 'internal project', 'Administrative', '#008b8b', '', 'internal', '', '', ''],
  ['6', '3.1', 'holidays', 'Administrative', '#20b2aa', '', 'internal', '', '', ''],
  ['7', '4', 'test', 'Internal', '', '', '', '', '', '11/03/2020'],
  ['8', '5', 'ProjectServer', 'Internal', '', '', '', '', '', '11/03/2020'],
  ['9', '6', "PROJET - PÉRIODE D'ABSENCE", 'Administrative', '', '', '', '', '', ''],
];
const healthColor = { surveyed: ['#ffd700', '#666'], secured: ['#32cd32', '#3a6a3a'], 'in danger': ['#ff0000', '#fff'] };
const toolIcons = ['newdoc', 'save', 'orangeRefresh', 'copydoc', 'cross', 'printer', 'pdf', 'mail', 'rss', 'windows', 'noBell', 'clip'];
const allocHead = who => <><HCell><Ico n="plus" s={14} /></HCell><HCell>id</HCell><HCell>{who}</HCell><HCell>profile</HCell><HCell>start date</HCell><HCell>end date</HCell><HCell>rate (%)</HCell></>;
const alloc = [['1', 'admin', 'Administrator', '100'], ['9', 'analyst C', 'Project Member', '100'], ['12', 'multi developer', 'Project Member', '20'], ['3', 'project manager', 'Project Leader', '20'], ['11', 'swing developer', 'Project Member', '100']];
const ACOLS = '76px 40px 101px 91px 66px 67px 61px';
const dotRows = [['status', '#ffa500'], ['health status', '#32cd32', 'secured'], ['quality level', '#32cd32', 'conform'], ['trend', '#ffd700', 'even']];
const checkRows = [['fix planning :', 'do not include in planning calculation'], ['non extendable project :', 'forbid to add or delete activities in planning'], ['under construction :', 'the project is not yet started'], ['exclude from global plan :', 'do not see all items on the global planning view']];
const amounts = [['cost :', ['0', '0', '4 500', '4 500']], ['expense :', ['0', '0', '0', '0']]];

const Search = ({ ml = 7 }) => <><IconGap $ml={ml}><Ico n="mag" s={14} /></IconGap><IconGap $ml={7}><Ico n="goto" s={14} /></IconGap></>;
const TreeItem = ({ item: [label, icon, lvl, ex, on] }) => (
  <TreeRow $lvl={lvl}>
    {ex ? <Expand>{ex}</Expand> : <TreeDots $lvl={lvl} />}
    <Ico n={icon} s={18} />
    <TreeLabel $on={on}>{label}</TreeLabel>
  </TreeRow>
);
const EditorBox = ({ h, children }) => (
  <Editor $h={h}>
    <EdBar>
      <EdRow>
        <EdBtn><FaBold /></EdBtn><EdBtn><FaItalic /></EdBtn><EdBtn><FaUnderline /></EdBtn><EdSep /><EdBtn><FaRemoveFormat /></EdBtn><EdSep />
        <EdBtn><FaOutdent color="#888" /></EdBtn><EdBtn><FaIndent color="#bbb" /></EdBtn><EdSep />
        <EdBtn><FaAlignLeft /></EdBtn><EdBtn><FaAlignCenter /></EdBtn><EdBtn><FaAlignRight /></EdBtn><EdBtn><FaAlignJustify /></EdBtn><EdSep />
        <EdBtn><FaListOl /></EdBtn><EdBtn><FaListUl /></EdBtn><EdSep />
        <EdBtn $w={27}><AUnder>A</AUnder><Caret $c="#666" /></EdBtn><EdBtn $w={27}><ABox>A</ABox><Caret $c="#666" /></EdBtn><EdSep />
        <EdBtn><FaPrint /></EdBtn><EdBtn><FaExpandArrowsAlt /></EdBtn><EdSep />
      </EdRow>
      <EdRow>
        <EdCombo>Font<Caret $c="#666" /></EdCombo><EdCombo>Size<Caret $c="#666" /></EdCombo><EdSep />
        <EdBtn><FaLink /></EdBtn><EdBtn><FaUnlink color="#bbb" /></EdBtn><EdBtn><FaImage /></EdBtn><EdBtn><FaTable /></EdBtn><EdBtn>Ω</EdBtn><EdBtn><FaPaste /></EdBtn><EdBtn><FaFileCode /></EdBtn>
      </EdRow>
    </EdBar>
    <EdContent>{children}</EdContent>
    <EdFoot><Grabber /></EdFoot>
  </Editor>
);
const FormLine = ({ label, children }) => <FRow><Lbl $w={113}>{label}</Lbl>{children}</FRow>;
const SelectLine = ({ label, value, req }) => (
  <FormLine label={label}><Inp $w={328} $h={16} $req={req}>{value}</Inp><Arrow><Caret /></Arrow><Search /></FormLine>
);
const FullSelect = ({ label }) => <FormLine label={label}><Inp $w={367} $h={16} /><Arrow><Caret /></Arrow></FormLine>;
const Amount = ({ w, v, off, u = '€' }) => <><Inp $w={w} $h={15} $ml={0} $off={off} $right>{v}</Inp><Unit $w={11}>{u}</Unit></>;

export default function App() {
  return (
    <Page>
      <Global />
      <Frame>
        <Row1>
          <LeftGroup>
            <NavBtn $w={23}><Ico n="arrowL" s={17} /></NavBtn>
            <NavBtn $w={25} $ml={1}><Ico n="arrowR" s={17} /></NavBtn>
            <NavBtn $w={52} $ml={7} $light><Ico n="qlogoSmall" s={12} />New tab</NavBtn>
            <ProjectLabel>Project :</ProjectLabel>
            <ProjectSelect>All projects<Caret /></ProjectSelect>
            <NavBtn $w={18} $ml={6} $light><Ico n="wrench" s={13} /></NavBtn>
            <NavBtn $w={20} $ml={4} $light><Ico n="gear" s={13} /></NavBtn>
            <NavBtn $w={25} $ml={3} $light><Ico n="mag" s={13} /></NavBtn>
          </LeftGroup>
          <AppTitle>ProjeQtOr 8.4</AppTitle>
          <RightGroup>
            <StatusTile $w={28}><Led /></StatusTile>
            <StatusTile $w={83} $ml={2}><Version>ProjeQtOr<br />V8.5.0</Version><Ico n="qlogo" s={24} /></StatusTile>
            <StatusTile $w={86} $ml={2} $light><Ico n="user" s={19} /><AdminName>admin</AdminName><Caret /></StatusTile>
            <StatusTile $w={45} $ml={4} $light><Ico n="monitor" s={20} /><Caret /></StatusTile>
          </RightGroup>
        </Row1>
        <Row2>
          <AllMenus><QTile><Ico n="qlogoSmall" s={16} /></QTile>All menus</AllMenus>
          <Tabs>
            {tabs.map(([lines, icon, on]) => (
              <Tab key={lines.join()} $on={on}>
                <TabBand $on={on}>{lines.map(l => <TabLine key={l}>{l}</TabLine>)}</TabBand>
                <TabIcon n={icon} s={24} />
              </Tab>
            ))}
          </Tabs>
          <MoreArrow width="10" height="30" viewBox="0 0 10 30"><path d="M1 1l7 14-7 14" stroke="#fff" strokeWidth="2.500" fill="none" /></MoreArrow>
        </Row2>
        <Body>
          <Sidebar>
            <Logo>Proje<LogoQ>Q</LogoQ>tOr<LogoHelp>?</LogoHelp></Logo>
            <AccHead $h={15}>Menu</AccHead>
            <Tree>{tree.map(t => <TreeItem key={t[0] + t[1]} item={t} />)}</Tree>
            <AccHead>Documents</AccHead>
            <Grip>....</Grip>
            <AccHead>0 Unread notifications</AccHead>
            <AccHead $h={19}>External shortcuts</AccHead>
            <ShortHead $h={18}>project name</ShortHead>
            <ShortRow>Project'Or RIA</ShortRow>
            <ShortRow>www.google.com</ShortRow>
            <ShortHead $h={17}>project two</ShortHead>
            <ShortRow>Dojo Toolkit</ShortRow>
            <SideFill />
            <AccHead $h={19}>Console messages</AccHead>
            <SubGap $h={2} />
          </Sidebar>
          <VSplit />
          <Main>
            <ListTitle>
              <TitleGear n="gear" s={24} />
              <PageTitle $w={419}>Projects</PageTitle>
              <FLabel $w={15}>id</FLabel><FInput $w={92} />
              <FLabel $w={30} $ml={15}>name</FLabel><FInput $w={152} />
              <FLabel $w={55} $right>type</FLabel><FInput $w={233} $ml={5} $sq /><FArrow><Caret /></FArrow>
              <FLabel $w={40} $ml={14}>customer</FLabel><FInput $w={233} $ml={6} $sq /><FArrow><Caret /></FArrow>
              <ResetBtn>Reset</ResetBtn>
              <ToolBtn $ml={6}><Ico n="check" s={16} /></ToolBtn>
              <ToolBtn><Ico n="mag" s={17} /></ToolBtn>
              <ToolBtn $w={36}><Ico n="filter" s={17} /><Caret /></ToolBtn>
              <ToolBtn $w={36} $ml={2}><Ico n="columns" s={17} /><Caret /></ToolBtn>
              <ToolBtn $ml={2}><Ico n="printer" s={18} /></ToolBtn>
              <ToolBtn><Ico n="pdf" s={18} /></ToolBtn>
              <ToolBtn><Ico n="excel" s={18} /></ToolBtn>
              <ToolBtn><Ico n="newdoc" s={18} /></ToolBtn>
              <ToolBtn><Ico n="orangeRefresh" s={18} /></ToolBtn>
              <FLabel $w={27} $ml={12}>closed</FLabel>
              <ClosedBox />
            </ListTitle>
            <ListTable>
              <thead><tr>{listCols.map(([t, w]) => <Th key={t} $w={w}>{t}</Th>)}</tr></thead>
              <tbody>
                {listRows.map((r, i) => {
                  const sel = i === 3;
                  const h = healthColor[r[7]];
                  return (
                    <Tr key={r[0]} $sel={sel} $odd={i % 2 === 0}>
                      <Td $al="right">{r[0]}</Td><Td>{r[1]}</Td><Td>{r[2]}</Td><Td $focus={sel}>{r[3]}</Td>
                      <Td $bg={r[4]} />
                      <Td>{r[5]}</Td><Td>{r[6]}</Td>
                      <Td $bg="#ffa500" $tc="#555" $al="center">recorded</Td>
                      <Td $bg={h && h[0]} $tc={h && h[1]} $al="center">{r[7]}</Td>
                      <Td><Pct>0 %</Pct><PctBar /></Td>
                      <Td>{r[8]}</Td><Td>{r[9]}</Td>
                      <Td $al="center"><Chk $sel={sel} /></Td><Td $al="center"><Chk $sel={sel} /></Td>
                    </Tr>
                  );
                })}
              </tbody>
            </ListTable>
            <HSplit />
            <Lower>
              <Detail>
                <DetailHead>
                  <TitleGear n="gear" s={24} />
                  <PageTitle $w={687}>Project &nbsp;#4 - project two</PageTitle>
                  <StatusFlag>recorded</StatusFlag>
                  <DateTile><Ico n="calendar" s={26} /><DateText>22/06<br />2019</DateText><DatePen><Ico n="pencil" s={10} /></DatePen></DateTile>
                  <Avatar $s={26} $ml={32} $b>E</Avatar>
                  <DetailTools>{toolIcons.map((n, i) => <DTool key={n} $off={i === 11}><Ico n={n} s={18} /></DTool>)}</DetailTools>
                </DetailHead>
                <Columns>
                  <Col>
                    <Pill><Caret $c="#fff" />Description</Pill>
                    <FormRows $mt={5}>
                      <FormLine label="id :"><Val>#&nbsp; 4</Val></FormLine>
                      <FormLine label="name :"><Inp $w={383} $req>project two</Inp></FormLine>
                      <SelectLine label="type :" value="Time & Materials" req />
                      <FullSelect label="organization :" />
                      <SelectLine label="category :" />
                      <SelectLine label="customer :" value="client two" />
                      <SelectLine label="bill contact :" />
                      <FormLine label="project code :"><Inp $w={158}>002-002</Inp></FormLine>
                      <FormLine label="contract code :"><Inp $w={158}>X24-001-007</Inp></FormLine>
                      <FormLine label="customer code :"><Inp $w={158} /></FormLine>
                      <SelectLine label="is sub-project of :" />
                      <FullSelect label="sponsor :" />
                      <FRow>
                        <Lbl $w={94}>manager</Lbl><Avatar $s={15} $ml={7}>E</Avatar>
                        <Inp $w={172} $h={16} $ml={2}>external project leader two</Inp><Arrow><Caret /></Arrow>
                        <ActionBtn $w={184}><Ico n="assign" s={13} />assign to me</ActionBtn>
                      </FRow>
                      <FRow>
                        <Lbl $w={113}>color :</Lbl><Swatch />
                        <Mini $w={33} $ml={2}><Ico n="color" s={13} /><Caret /></Mini>
                        <Mini $w={30} $ml={2}>reset</Mini>
                      </FRow>
                    </FormRows>
                    <EdLabel $h={13}>description</EdLabel>
                    <EditorBox h={150}>1st project<br />This project has 2 sub-projects</EditorBox>
                    <EdLabel $h={12}>objectives</EdLabel>
                    <EditorBox h={146} />
                    <Pill $mt={4}><Caret $c="#fff" />Predecessor element<PillCount>0</PillCount></Pill>
                    <Grid $mt={4} $cols="51px 101px 201px 75px 75px">
                      <HCell $h={17}><Ico n="plus" s={14} /></HCell><HCell $h={17}>element</HCell><HCell $h={17}>name</HCell><HCell $h={17}>status</HCell><HCell $h={17}>end date</HCell>
                    </Grid>
                  </Col>
                  <Col>
                    <Pill><Caret $c="#fff" />Allocations to projects<PillCount>6</PillCount></Pill>
                    <Grid $mt={5} $cols={ACOLS}>
                      {allocHead('resource')}
                      {alloc.map(a => (
                        <React.Fragment key={a[0]}>
                          <BCell $flex><Ico n="pencil" s={14} /><Ico n="cross" s={14} /><Ico n="refresh" s={14} /></BCell>
                          <BCell $al="center">{a[0]}</BCell><BCell>{a[1]}</BCell><BCell $al="center">{a[2]}</BCell><BCell /><BCell /><BCell $al="center">{a[3]}</BCell>
                        </React.Fragment>
                      ))}
                    </Grid>
                    <Grid $mt={1} $cols={ACOLS}>
                      {allocHead('contact')}
                      <BCell $h={21} $flex><Ico n="pencil" s={14} /><Ico n="cross" s={14} /></BCell>
                      <BCell $h={21} $al="center">6</BCell><BCell $h={21} $wrap>external project leader two</BCell><BCell $h={21} $al="center" $wrap>External Project Leader</BCell><BCell $h={21} /><BCell $h={21} /><BCell $h={21} $al="center">100</BCell>
                    </Grid>
                    <Grid $mt={1} $cols={ACOLS}>{allocHead('user')}</Grid>
                    <Pill $mt={3}><Caret $c="#fff" />Treatment</Pill>
                    <FormRows $mt={4}>
                      {dotRows.map(([l, c, v]) => (
                        <FRow key={l}>
                          <Lbl $w={93}>{l}</Lbl><Dot $c={c} />
                          {v ? <><Inp $w={327} $h={17} $ml={1}>{v}</Inp><Arrow><Caret /></Arrow><Search /></> : <><Inp $w={154} $h={17} $ml={1} $req>recorded</Inp><Arrow><Caret /></Arrow><ActionBtn $w={164}><Ico n="assign" s={13} />qualified</ActionBtn><Search ml={11} /></>}
                        </FRow>
                      ))}
                      <FRow><Lbl $w={112}>overall progress :</Lbl><Inp $w={327} $h={17} $ml={6}>100%</Inp><Arrow><Caret /></Arrow><Search /></FRow>
                      {checkRows.map(([l, t]) => (
                        <FRow key={l}><Lbl $w={112}>{l}</Lbl><Inp $w={14} $h={14} $ml={5} /><Val $ml={2}>{t}</Val></FRow>
                      ))}
                      <FRow><Lbl $w={112}>handled :</Lbl><Inp $w={14} $h={14} $ml={5} /><Inp $w={59} $h={17} $ml={3} /></FRow>
                      <FRow><Lbl $w={112}>done :</Lbl><Inp $w={14} $h={14} $ml={5} /><Inp $w={59} $h={17} $ml={3} /></FRow>
                      <FRow><Lbl $w={112}>closed :</Lbl><Inp $w={14} $h={14} $ml={5} /><Inp $w={59} $h={17} $ml={3} /><Inp $w={15} $h={14} $ml={10} /><Val $ml={2}>cancelled</Val></FRow>
                    </FormRows>
                    <Pill $mt={3}><Caret $c="#fff" />Products linked to this project</Pill>
                    <Grid $mt={3} $cols="51px 252px 75px 75px 50px">
                      <HCell $h={17}><Ico n="plus" s={14} /></HCell><HCell $h={17}>product</HCell><HCell $h={17}>start date</HCell><HCell $h={17}>end date</HCell><HCell $h={17}>closed</HCell>
                    </Grid>
                    <Pill $mt={3}><Caret $c="#fff" />Versions linked to this project<PillCount>2</PillCount></Pill>
                    <Grid $mt={4} $cols="51px 252px 75px 75px 50px">
                      <HCell $h={17}><Ico n="plus" s={14} /></HCell><HCell $h={17}>version</HCell><HCell $h={17}>start date</HCell><HCell $h={17}>end date</HCell><HCell $h={17}>closed</HCell>
                      <BCell $flex><Ico n="pencil" s={14} /><Ico n="cross" s={14} /></BCell><BCell>swing application V1.0</BCell><BCell $al="center" $c="#ff5577">[01/01/2018]</BCell><BCell /><BCell $al="center"><Chk /></BCell>
                    </Grid>
                    <Pill $mt={4}><Caret $c="#fff" />Sub projects</Pill>
                    <SubLine>Sub projects :</SubLine>
                    <SubGap $h={50} />
                    <Pill $shift><Caret $c="#fff" />Successor element<PillCount>0</PillCount></Pill>
                    <Grid $mt={4} $shift $cols="60px 118px 237px 89px">
                      <HCell $h={17}><Ico n="plus" s={14} /></HCell><HCell $h={17}>element</HCell><HCell $h={17}>name</HCell><HCell $h={17}>status</HCell>
                    </Grid>
                  </Col>
                  <Col>
                    <Pill><Caret $c="#fff" />Progress</Pill>
                    <CalcBar $mt={7}>Dates and durations</CalcBar>
                    <Heads $h={12}><HeadItem $ml={63} $w={68}>validated</HeadItem><HeadItem $ml={0} $w={67}>planned</HeadItem><HeadItem $ml={0} $w={127}>real</HeadItem><HeadItem $ml={0} $w={80}>requested</HeadItem></Heads>
                    <CRow><CLbl>start date :</CLbl><Inp $w={59} $h={17} $ml={6}>06/11/2015</Inp><Inp $w={58} $h={17} $ml={9} $off>11/03/2020</Inp><Inp $w={59} $h={17} $ml={8} $off /><Inp $w={59} $h={17} $ml={68}>12/03/2012</Inp></CRow>
                    <CRow><CLbl>end date :</CLbl><Inp $w={59} $h={17} $ml={6}>29/02/2016</Inp><Inp $w={58} $h={17} $ml={9} $pink>04/05/2020</Inp><Inp $w={59} $h={17} $ml={8} $off /><Inp $w={59} $h={17} $ml={68}>24/08/2015</Inp></CRow>
                    <CRow><CLbl>duration :</CLbl><Inp $w={59} $ml={6} $right>82</Inp><Unit $w={9}>d</Unit><Inp $w={58} $ml={0} $off $right>39</Inp><Unit $w={8}>d</Unit><Inp $w={59} $ml={0} $off /><Unit $w={68}>d</Unit><Inp $w={59} $ml={0} $right>894</Inp><Unit $w={9}>d</Unit></CRow>
                    <CalcBar $mt={2}>Costs and works</CalcBar>
                    <Heads $h={13}><HeadItem $ml={63} $w={89}>validated</HeadItem><HeadItem $ml={0} $w={87}>assigned</HeadItem><HeadItem $ml={0} $w={89}>real</HeadItem><HeadItem $ml={0} $w={88}>left</HeadItem><HeadItem $ml={0} $w={80}>reassessed</HeadItem></Heads>
                    <CRow><CLbl>work :</CLbl><Cell $ml={10}><Amount w={59} v="0" u="d" /></Cell>{['0', '0', '9', '9'].map((v, i) => <Cell key={i}><Amount w={59} v={v} u="d" off /></Cell>)}</CRow>
                    {amounts.map(([l, vals]) => (
                      <CRow key={l}><CLbl>{l}</CLbl><Cell $ml={7}><Amount w={77} v="" /></Cell>{vals.map((v, i) => <Cell key={i}><Amount w={77} v={v} off /></Cell>)}</CRow>
                    ))}
                    <CRow><CLbl>reserve :</CLbl><Blank $ml={7} $w={264} /><Cell><Amount w={77} v="0" off /></Cell></CRow>
                    <CRow><CLbl>total cost :</CLbl><Cell $ml={7}><Amount w={77} v="0" off /></Cell>{['0', '0', '4 500', '4 500'].map((v, i) => <Cell key={i}><Amount w={77} v={v} off /></Cell>)}</CRow>
                    <CalcBar $mt={1}>Steering</CalcBar>
                    <SubGap $h={2} />
                    <CRow><CLbl>progress :</CLbl><CText $ml={6} $w={40}>0 %</CText><CText $ml={0} $w={76} $right>expected :</CText><CText $ml={6} $w={40}>0 %</CText><CText $ml={0} $w={75} $right>wbs :</CText><CText $ml={6} $w={10}>2</CText></CRow>
                    <CRow $h={20}><CLbl>margin :</CLbl><Inp $w={59} $ml={7} $off $right>0</Inp><Unit $w={11}>d</Unit><CText $ml={0} $w={57}>%</CText><Inp $w={76} $ml={0} $off /><Unit $w={14}>€</Unit><CText $ml={0} $w={10}>%</CText></CRow>
                    <CRow $h={20}><CLbl>priority :</CLbl><Inp $w={37} $ml={6} $right>500</Inp></CRow>
                    <Pill $mt={2}><Caret $c="#fff" />Linked Elements<PillCount>0</PillCount></Pill>
                    <Grid $mt={4} $cols="27px 76px 276px 75px 50px">
                      <HCell><Ico n="plus" s={14} /></HCell><HCell>element</HCell><HCell>name</HCell><HCell>status</HCell><HCell>resp.</HCell>
                    </Grid>
                    <Pill $mt={4}><Caret $c="#fff" />Attachments<PillCount>1</PillCount></Pill>
                    <Grid $mt={3} $cols="52px 25px 427px">
                      <HCell><Ico n="plus" s={14} /><Ico n="globe" s={14} /></HCell><HCell>id</HCell><HCell>file</HCell>
                      <BCell $h={19} $flex><Ico n="globe" s={14} /><Ico n="cross" s={14} /></BCell>
                      <BCell $h={19} $al="center">#5</BCell>
                      <BCell $h={19} $flex><RowIcons><Ico n="lens" s={15} /><IconGap $ml={7}><Ico n="folderHand" s={13} /></IconGap><FileName>Dojo Toolkit</FileName><Ico n="calendar" s={18} /><Avatar $s={15}>A</Avatar></RowIcons></BCell>
                    </Grid>
                    <Pill $mt={5}><Caret $c="#fff" />Notes<PillCount>0</PillCount></Pill>
                    <Grid $mt={4} $cols="51px 26px 427px">
                      <HCell><Ico n="plus" s={14} /></HCell><HCell>id</HCell><HCell>note</HCell>
                    </Grid>
                  </Col>
                </Columns>
              </Detail>
              <Activity>
                <ActHead>Activity Stream<Ico n="monitor" s={18} /></ActHead>
                <ActEmpty>No notes in this element</ActEmpty>
                <ActInput>Enter your text here<ActDot>...</ActDot></ActInput>
              </Activity>
            </Lower>
          </Main>
        </Body>
      </Frame>
      <Handle />
      <Overlay width="2000" height="1200" viewBox="0 0 2000 1200">
        <path d="M1677 122.500H2.500V183.500H1917.500V156" fill="none" stroke="#ff0000" strokeWidth="5" />
        <g fill="none" stroke="#ff22ee" strokeWidth="4.500" strokeDasharray="11 5">
          <path d="M172 455H1952" />
          <path d="M173.500 186V1177" />
          <path d="M1727 453V1178" />
        </g>
        <rect x="1657.500" y="113.500" width="276" height="40" fill="none" stroke="#e97a2b" strokeWidth="5" />
        <path d="M2.500 207V226.500H173" fill="none" stroke="#e97a2b" strokeWidth="5" />
        <path d="M76 228L203 264" fill="none" stroke="#e97a2b" strokeWidth="4" />
      </Overlay>
      <Badge $x={932} $y={153} $it>1</Badge>
      <Badge $x={202} $y={228} $it>2</Badge>
      <Badge $x={45} $y={428}>3</Badge>
      <Badge $x={45} $y={1084} $it>4</Badge>
      <Badge $x={579} $y={303}>5</Badge>
      <Badge $x={894} $y={789}>6</Badge>
      <Badge $x={1781} $y={48} $it>7</Badge>
      <Badge $x={1811} $y={732}>8</Badge>
    </Page>
  );
}
